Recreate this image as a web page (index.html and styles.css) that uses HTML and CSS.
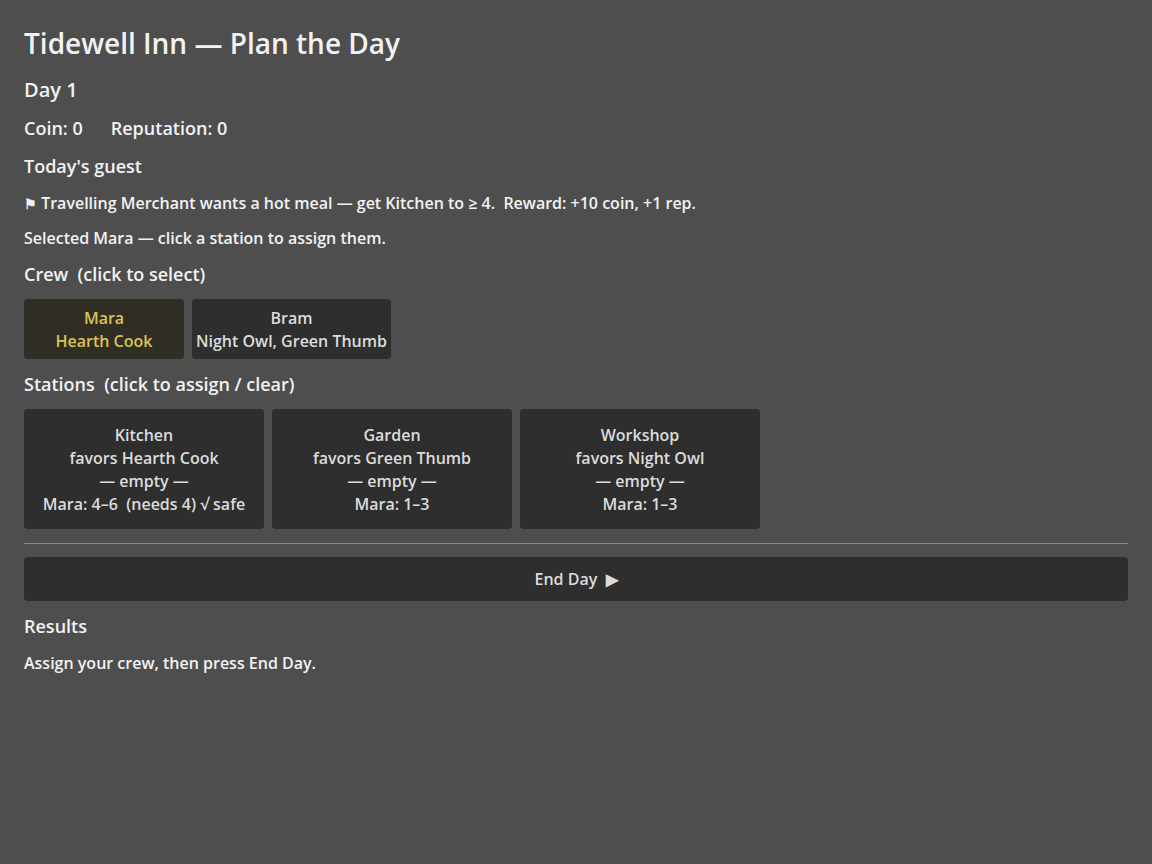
FILE: index.html
```html
<!DOCTYPE html>
<html lang="en">
<head>
  <meta charset="UTF-8">
  <title>Tidewell Inn</title>
  <link rel="stylesheet" href="styles.css">
</head>
<body>

<div id="app">
  <h1>Tidewell Inn — Plan the Day</h1>
  <h2>Day 1</h2>
  <div class="stats"><span>Coin: 0</span><span>Reputation: 0</span></div>
  <h3>Today's guest</h3>
  <p class="guest"><span class="flag">&#9873;</span> Travelling Merchant wants a hot meal — get Kitchen to ≥ 4.&nbsp; Reward: +10 coin, +1 rep.</p>
  <p class="status">Selected Mara — click a station to assign them.</p>

  <h3>Crew&nbsp; (click to select)</h3>
  <div class="crew">
    <button class="crew-card selected">Mara<br>Hearth Cook</button>
    <button class="crew-card">Bram<br>Night Owl, Green Thumb</button>
  </div>

  <h3>Stations&nbsp; (click to assign / clear)</h3>
  <div class="stations">
    <button class="station">Kitchen<br>favors Hearth Cook<br>— empty —<br>Mara: 4–6&nbsp; (needs 4) √ safe</button>
    <button class="station">Garden<br>favors Green Thumb<br>— empty —<br>Mara: 1–3</button>
    <button class="station">Workshop<br>favors Night Owl<br>— empty —<br>Mara: 1–3</button>
  </div>

  <hr>
  <button class="end-day">End Day&nbsp; ▶</button>

  <h3>Results</h3>
  <p class="log">Assign your crew, then press End Day.</p>
</div>

</body>
</html>
```

FILE: styles.css
```css
body {
  margin: 0;
  background: #4e4e4e;
  color: #f2f2f2;
  font-family: "Open Sans", sans-serif;
  font-weight: 600;
}
#app {
  padding: 24px;
  display: flex;
  flex-direction: column;
  align-items: flex-start;
  gap: 12px;
}
h1, h2, h3, p {
  margin: 0;
  font-weight: 600;
}
h1 {
  font-size: 28px;
  line-height: 40px;
  margin: -1px 0 1px;
}
h2 {
  font-size: 20px;
  line-height: 28px;
}
h3 {
  font-size: 18px;
  line-height: 26px;
}
.stats {
  font-size: 18px;
  line-height: 26px;
  margin-top: -1px;
}
.stats span {
  margin-right: 28px;
}
.guest, .status, .log {
  font-size: 16px;
  line-height: 22px;
  margin-top: 1px;
}
.flag {
  font-size: 14px;
  line-height: 0;
}
.crew, .stations {
  display: flex;
  gap: 8px;
}
button {
  font-family: inherit;
  font-size: 16px;
  line-height: 23px;
  font-weight: 600;
  color: #dcdcdc;
  background: #2e2e2e;
  border: none;
  border-radius: 4px;
  cursor: pointer;
}
.crew-card {
  min-width: 160px;
  padding: 8px 4px 6px;
}
.crew-card.selected {
  background: #302d24;
  color: #dcc256;
}
.station {
  width: 240px;
  height: 120px;
  padding: 2px 4px 0;
}
hr {
  align-self: stretch;
  border: none;
  border-top: 1px solid #8a8a8a;
  margin: 2px 0 1px;
}
.end-day {
  align-self: stretch;
  height: 44px;
}
```
